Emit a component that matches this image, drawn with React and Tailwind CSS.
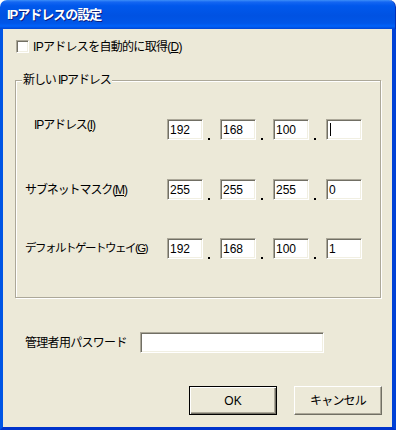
import React from "react";

const sunken =
  "bg-white border border-t-[#ACA899] border-l-[#ACA899] border-b-white border-r-white shadow-[inset_1px_1px_0_#716F64,inset_-1px_-1px_0_#F1EFE2]";

const font = "font-['Liberation_Sans','Noto_Sans_CJK_JP',sans-serif]";

function Field({ value, caret }) {
  return (
    <div className={`w-[36px] h-[21px] ${sunken} flex items-center pl-[2px] text-[12px] leading-none text-black`}>
      {value}
      {caret && <div className="w-[1px] h-[13px] bg-black ml-[1px]" />}
    </div>
  );
}

function Dot() {
  return (
    <div className="w-[17px] h-[21px] flex items-end">
      <div className="w-[2px] h-[2px] bg-black ml-[5px]" />
    </div>
  );
}

function IpRow({ label, values, labelClass, caretIndex }) {
  return (
    <div className="flex h-[21px]">
      <div className={labelClass}>{label}</div>
      {values.map((v, i) => (
        <React.Fragment key={i}>
          <Field value={v} caret={caretIndex === i} />
          {i < 3 && <Dot />}
        </React.Fragment>
      ))}
    </div>
  );
}

export default function App() {
  return (
    <div className={`w-[396px] h-[430px] flex flex-col ${font} text-[12px] text-black`}>
      {/* Title bar */}
      <div className="h-[29px] shrink-0 rounded-t-[7px] bg-[linear-gradient(to_bottom,#3D8FF8_0%,#1466F2_7%,#0058EC_20%,#0052E2_55%,#0056E8_80%,#0062FA_90%,#0046D4_100%)] flex items-center pl-[7px] border-r-[1px] border-r-[#0030B8]">
        <span className="text-white font-bold text-[13px] leading-none tracking-[-1px] [text-shadow:1px_1px_0_#0A1F82]">
          IPアドレスの設定
        </span>
      </div>
      {/* Body */}
      <div className="flex-1 bg-[#ECE9D8] border-l-[3px] border-r-[4px] border-b-[3px] border-l-[#0055E5] border-r-[#0041D6] border-b-[#0033CC] pt-[11px] pl-[12px] flex flex-col">
        {/* Checkbox row */}
        <div className="flex items-center h-[13px] ml-[1px]">
          <div className={`w-[13px] h-[13px] ${sunken}`} />
          <span className="ml-[4px] leading-none tracking-[-0.7px]">
            IPアドレスを自動的に取得(<u>D</u>)
          </span>
        </div>

        {/* Group box */}
        <div className="relative mt-[27px] w-[366px] h-[218px] border border-[#ACA899] shadow-[1px_1px_0_#FFFFFF,inset_1px_1px_0_#FFFFFF] pt-[38px] flex flex-col">
          <span className="absolute left-[6px] top-[-8px] px-[1px] bg-[#ECE9D8] leading-[14px] tracking-[-1.1px]">
            新しい&nbsp;IPアドレス
          </span>
          <IpRow
            label={<span>IPアドレス(<u>I</u>)</span>}
            values={["192", "168", "100", ""]}
            caretIndex={3}
            labelClass="w-[151px] pl-[18px] leading-none tracking-[-1.1px]"
          />
          <div className="h-[39px]" />
          <IpRow
            label={<span>サブネットマスク(<u>M</u>)</span>}
            values={["255", "255", "255", "0"]}
            labelClass="w-[151px] pl-[9px] flex items-center tracking-[-1.1px]"
          />
          <div className="h-[38px]" />
          <IpRow
            label={<span>デフォルトゲートウェイ(<u>G</u>)</span>}
            values={["192", "168", "100", "1"]}
            labelClass="w-[151px] pl-[9px] flex items-center text-[11.5px] tracking-[-1.5px]"
          />
        </div>

        {/* Password row */}
        <div className="flex items-center mt-[34px] h-[21px]">
          <div className="w-[125px] pl-[10px] tracking-[-0.7px]">管理者用パスワード</div>
          <div className={`w-[184px] h-[21px] ${sunken}`} />
        </div>

        {/* Buttons */}
        <div className="flex mt-[33px] ml-[174px] gap-[17px]">
          <button className="w-[88px] h-[29px] border border-black bg-[#ECE9D8] shadow-[inset_1px_1px_0_#FFFFFF,inset_-1px_-1px_0_#716F64,inset_-2px_-2px_0_#ACA899] flex items-center justify-center leading-none">
            OK
          </button>
          <button className="w-[88px] h-[29px] bg-[#ECE9D8] border border-t-white border-l-white border-b-[#716F64] border-r-[#716F64] shadow-[inset_-1px_-1px_0_#ACA899] flex items-center justify-center leading-none tracking-[-0.8px]">
            キャンセル
          </button>
        </div>
      </div>
    </div>
  );
}
